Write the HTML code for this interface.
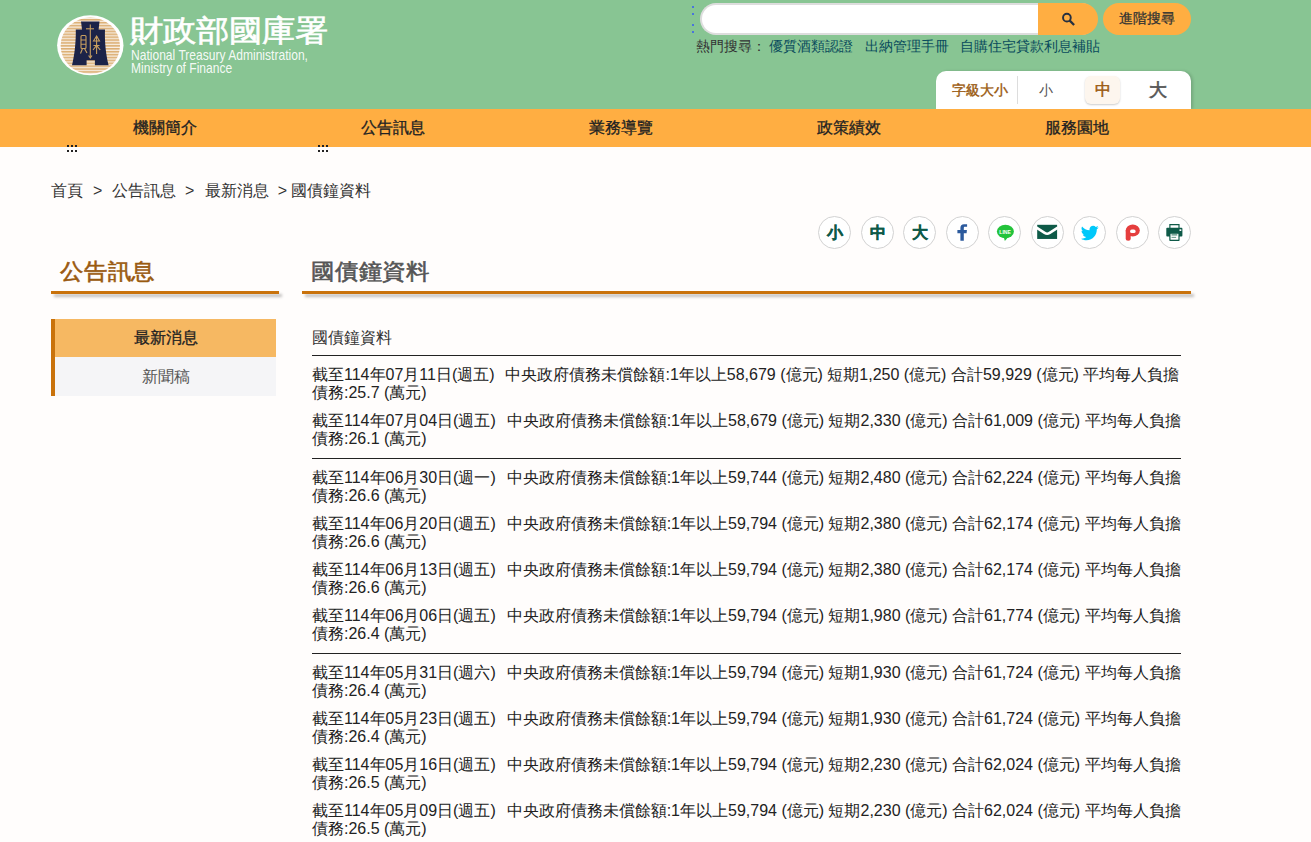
<!DOCTYPE html>
<html><head><meta charset="utf-8">
<style>
*{margin:0;padding:0;box-sizing:border-box}
html,body{width:1311px;height:842px;overflow:hidden;background:#fffdfc;font-family:"Liberation Sans",sans-serif;color:#333}
.abs{position:absolute;white-space:nowrap}
#hdr{position:absolute;left:0;top:0;width:1311px;height:109px;background:#88c593}
#nav{position:absolute;z-index:2;left:0;top:109px;width:1311px;height:38px;background:#ffae42}
.navi{position:absolute;top:0;height:38px;line-height:38px;width:228px;text-align:center;font-size:16px;color:#222;-webkit-text-stroke:.3px #222}
.title1{font-size:33px;color:#fff;line-height:32px;-webkit-text-stroke:.7px #fff;transform:scaleY(.9);transform-origin:0 0}
.en{font-size:14.2px;color:rgba(255,255,255,.93);line-height:13px;transform:scaleX(.85);transform-origin:0 0}
#search{position:absolute;left:700px;top:3px;width:397px;height:32px;border-radius:16px;background:#fff;border:2px solid #ddd;border-right:none;overflow:hidden}
#sbtn{position:absolute;left:1038px;top:3px;width:60px;height:32px;border-radius:0 16px 16px 0;background:#ffae42}
#adv{position:absolute;left:1103px;top:3px;width:88px;height:32px;border-radius:16px;background:#ffae42;text-align:center;line-height:30.6px;font-size:14px;color:#333;-webkit-text-stroke:.25px #333}
.hot{position:absolute;left:696px;top:37px;font-size:14px;line-height:18px;color:#333;white-space:nowrap}
.hot a{color:#084b5c;text-decoration:none;margin-left:11.5px}
.dk{width:2px;height:2px;background:#222;z-index:3}
.dot{width:1.8px;height:1.8px;background:#4a74dc}
#fsz{position:absolute;left:936px;top:71px;width:255px;height:38px;background:#fff;border-radius:10px 10px 0 0;box-shadow:2px 0 3px rgba(0,0,0,.15)}
.crumb{position:absolute;left:51px;top:180.8px;font-size:16px;line-height:20px;color:#333;white-space:nowrap}
.share{position:absolute;top:216px;width:33px;height:33px;border-radius:50%;border:1px solid #d2d2d2;background:#fff}
.share span{position:absolute;left:0;top:0;width:31px;height:31px;line-height:31px;text-align:center;font-size:16px;font-weight:bold;color:#0e5a48;-webkit-text-stroke:.3px #0e5a48}
.share svg{position:absolute;left:0;top:0}
.h2l{position:absolute;left:60px;top:258.2px;transform:scale(.99,.93);transform-origin:0 0;font-size:24px;line-height:30px;font-weight:500;-webkit-text-stroke:.6px currentColor;color:#9a5a10}
.h2r{position:absolute;left:311px;top:258.2px;transform:scale(.99,.93);transform-origin:0 0;font-size:24px;line-height:30px;font-weight:500;-webkit-text-stroke:.6px currentColor;color:#555}
.uline{position:absolute;top:291px;height:3px;background:#c9720b;box-shadow:3px 3px 3px rgba(0,0,0,.25)}
.menu{position:absolute;left:51px;width:225px;height:38px;line-height:38px;text-align:center;font-size:16px;border-left:4px solid #c9720b}
#content{position:absolute;left:312px;top:325px;width:869px;font-size:16px;color:#222}
.ct{line-height:26px;height:30px;color:#333}
hr{border:none;border-top:1px solid #222;height:0}
.it{line-height:18px;white-space:nowrap;margin:10px 0}
</style></head><body>
<div id="hdr"></div>
<div id="nav"><div class="navi" style="left:51px">機關簡介</div><div class="navi" style="left:279px">公告訊息</div><div class="navi" style="left:507px">業務導覽</div><div class="navi" style="left:735px">政策績效</div><div class="navi" style="left:963px">服務園地</div></div>
<svg class="abs" style="left:50px;top:10px" width="80" height="70" viewBox="0 0 80 70">
<defs><clipPath id="ce"><ellipse cx="40.3" cy="35.8" rx="29.7" ry="28.2"/></clipPath>
<pattern id="st" width="4" height="2.9" patternUnits="userSpaceOnUse" y="0.3"><rect width="4" height="2.9" fill="#f8efe4"/><rect width="4" height="1.6" fill="#dcae72"/></pattern></defs>
<ellipse cx="40.3" cy="35.3" rx="33.2" ry="30" fill="#fff"/>
<rect x="0" y="0" width="80" height="70" fill="url(#st)" clip-path="url(#ce)"/>
<path d="M31,11.5 L49.5,11.5 L48.6,19.5 L55,19.5 C54.5,32 56,45 58.6,55.3 L44.9,55.3 L44.9,50.3 L36.6,50.3 L36.6,55.3 L22,55.3 C24.6,45 26,32 25.8,19.5 L32,19.5 Z" fill="#1c2348"/>
<g stroke="#c9a060" stroke-width="1.1" fill="none">
<path d="M40.3,14.5 V47"/><path d="M36,18.8 H44"/><path d="M38.6,45.5 L40.3,48 L42,45.5"/>
<rect x="31" y="25.5" width="5" height="13" rx="1"/><path d="M31,30 H36 M31,34.3 H36"/><path d="M32.5,38.5 L30.5,43.5 M34.5,38.5 L37,43"/>
<path d="M43.5,31 L46.6,26 L49.5,31 Z"/><path d="M46.6,26 V44 M43,40 L46.6,35.5 L50.2,40 M43.5,35.5 H49.5"/>
</g>
</svg>
<div class="abs title1" style="left:130px;top:17px">財政部國庫署</div>
<div class="abs en" style="left:130.8px;top:48.9px">National Treasury Administration,<br>Ministry of Finance</div>
<div class="abs dot" style="left:692px;top:6.3px"></div><div class="abs dot" style="left:692px;top:13.3px"></div><div class="abs dot" style="left:692px;top:23.8px"></div><div class="abs dot" style="left:692px;top:30.8px"></div>
<div id="search"></div>
<div id="sbtn"><svg width="60" height="32" viewBox="0 0 60 32"><circle cx="28.9" cy="14.65" r="3.85" stroke="#263040" stroke-width="1.95" fill="none"/><path d="M31.5,17.4 L36.1,22" stroke="#263040" stroke-width="2.3"/></svg></div>
<div id="adv">進階搜尋</div>
<div class="hot">熱門搜尋：<a style="margin-left:3px">優質酒類認證</a><a>出納管理手冊</a><a>自購住宅貸款利息補貼</a></div>
<div id="fsz">
 <div class="abs" style="left:15.5px;top:0;line-height:38px;font-size:14px;color:#9a5a10;-webkit-text-stroke:.4px #9a5a10">字級大小</div>
 <div class="abs" style="left:81px;top:5px;width:1px;height:28px;background:#ddd"></div>
 <div class="abs" style="left:103px;top:0;line-height:38px;font-size:14px;color:#555">小</div>
 <div class="abs" style="left:149px;top:5px;width:35px;height:28px;border-radius:6px;background:#fdf6ee;box-shadow:0 1px 2px rgba(0,0,0,.2)"></div>
 <div class="abs" style="left:159px;top:0;line-height:38px;font-size:16px;color:#9a5a10;-webkit-text-stroke:.5px #9a5a10">中</div>
 <div class="abs" style="left:213px;top:0;line-height:38px;font-size:18px;color:#555;-webkit-text-stroke:.6px #555">大</div>
</div>
<div class="abs dk" style="left:67px;top:145px"></div><div class="abs dk" style="left:71px;top:145px"></div><div class="abs dk" style="left:75px;top:145px"></div><div class="abs dk" style="left:67px;top:150px"></div><div class="abs dk" style="left:71px;top:150px"></div><div class="abs dk" style="left:75px;top:150px"></div>
<div class="abs dk" style="left:318px;top:145px"></div><div class="abs dk" style="left:322px;top:145px"></div><div class="abs dk" style="left:326px;top:145px"></div><div class="abs dk" style="left:318px;top:150px"></div><div class="abs dk" style="left:322px;top:150px"></div><div class="abs dk" style="left:326px;top:150px"></div>
<div class="crumb">首頁 &nbsp;<span style="margin-left:1px">&gt;</span>&nbsp; <span style="margin-left:1px">公告訊息</span> &nbsp;&gt;&nbsp; <span style="margin-left:1.5px">最新消息</span> &nbsp;&gt; 國債鐘資料</div>
<div class="share" style="left:818.00px"><span>小</span></div><div class="share" style="left:861.00px"><span>中</span></div><div class="share" style="left:903.00px"><span>大</span></div><div class="share" style="left:946.00px"><svg width="31" height="31" viewBox="0 0 31 31"><path d="M13.4,23.8 V16.3 H10.4 V13 H13.4 V11 C13.4,8.7 14.6,7.2 17,7.2 H20.1 V9.8 H17.9 C17.2,9.8 16.8,10.2 16.8,11 V13 H19.9 L19.6,16.3 H16.8 V23.8 Z" fill="#2c5a9d"/></svg></div><div class="share" style="left:988.00px"><svg width="31" height="31" viewBox="0 0 31 31"><ellipse cx="16.4" cy="14.5" rx="8.5" ry="6.8" fill="#23c33b"/><path d="M14.7,20 L15.9,24 L19.2,20 Z" fill="#23c33b"/><text x="16.05" y="16.6" font-family="Liberation Sans" font-weight="bold" font-size="5" fill="#fff" text-anchor="middle">LINE</text></svg></div><div class="share" style="left:1031.00px"><svg width="31" height="31" viewBox="0 0 31 31"><rect x="5.2" y="7.8" width="19.9" height="14.15" fill="#0e5a48"/><path d="M4.5,10.6 L12.6,15.9 Q15.15,17.6 17.7,15.9 L25.8,10.6" stroke="#fff" stroke-width="2.6" fill="none"/></svg></div><div class="share" style="left:1073.00px"><svg viewBox="0 0 24 24" style="left:7.2px;top:6.9px" width="17.9" height="17.9"><path d="M23.6,4.6c-.9.4-1.8.6-2.8.8 1-.6 1.8-1.6 2.1-2.7-.9.6-2,1-3.1,1.2C18.9,2.9 17.7,2.3 16.3,2.3c-2.7,0-4.9,2.2-4.9,4.9 0,.4 0,.8.1,1.1C7.4,8.1 3.8,6.2 1.4,3.2 1,3.9.7,4.8.7,5.7c0,1.7.9,3.2 2.2,4.1-.8,0-1.6-.2-2.2-.6v.1c0,2.4 1.7,4.4 3.9,4.8-.4.1-.8.2-1.3.2-.3,0-.6,0-.9-.1.6,2 2.4,3.4 4.6,3.4-1.7,1.3-3.8,2.1-6.1,2.1-.4,0-.8,0-1.2-.1 2.2,1.4 4.8,2.2 7.5,2.2 9.1,0 14-7.5 14-14v-.6c1-.7 1.8-1.6 2.4-2.5z" fill="#00c8fa"/></svg></div><div class="share" style="left:1116.00px"><svg width="31" height="31" viewBox="0 0 31 31"><ellipse cx="15.75" cy="13.6" rx="7.05" ry="6" fill="#e53e3e"/><path d="M8.7,13.6 H13.7 V21.2 A2.5,2.5 0 0 1 8.7,21.2 Z" fill="#e53e3e"/><rect x="13.1" y="12.6" width="5.5" height="3.5" rx="1.7" fill="#fff"/></svg></div><div class="share" style="left:1158.00px"><svg width="31" height="31" viewBox="0 0 31 31"><path d="M10.9,11.5 V7.6 H20 V11.5" stroke="#0e5a48" stroke-width="1.15" fill="none"/><rect x="7.3" y="10.8" width="16.1" height="8.7" rx=".9" fill="#0e5a48"/><rect x="20.5" y="12.3" width="1.8" height="1.7" fill="#fff"/><rect x="10.3" y="16" width="10.3" height="8" rx=".8" fill="#0e5a48"/><rect x="11.5" y="16.8" width="7.9" height="5.9" fill="#fff"/><rect x="12.5" y="17.1" width="5.8" height="1.5" fill="#6b9f8f"/><rect x="12.5" y="19.9" width="4.6" height=".8" fill="#3f7f6c"/></svg></div>
<div class="h2l">公告訊息</div>
<div class="uline" style="left:51px;width:228px"></div>
<div class="h2r">國債鐘資料</div>
<div class="uline" style="left:302px;width:889px"></div>
<div class="menu" style="top:319px;background:#f6b862;color:#222;-webkit-text-stroke:.3px #222">最新消息</div>
<div class="menu" style="top:357px;height:39px;line-height:40px;background:#f5f5f7;color:#555">新聞稿</div>
<div id="content">
<div class="ct">國債鐘資料</div>
<hr>
<div class="it">截至114年07月11日(週五)&nbsp; <span style="margin-left:2px">中央政府債務未償餘額:1年以上58,679 (億元) 短期1,250 (億元) 合計59,929 (億元) 平均每人負擔</span><br>債務:25.7 (萬元)</div>
<div class="it">截至114年07月04日(週五)&nbsp; <span style="margin-left:2px">中央政府債務未償餘額:1年以上58,679 (億元) 短期2,330 (億元) 合計61,009 (億元) 平均每人負擔</span><br>債務:26.1 (萬元)</div>
<hr>
<div class="it">截至114年06月30日(週一)&nbsp; <span style="margin-left:2px">中央政府債務未償餘額:1年以上59,744 (億元) 短期2,480 (億元) 合計62,224 (億元) 平均每人負擔</span><br>債務:26.6 (萬元)</div>
<div class="it">截至114年06月20日(週五)&nbsp; <span style="margin-left:2px">中央政府債務未償餘額:1年以上59,794 (億元) 短期2,380 (億元) 合計62,174 (億元) 平均每人負擔</span><br>債務:26.6 (萬元)</div>
<div class="it">截至114年06月13日(週五)&nbsp; <span style="margin-left:2px">中央政府債務未償餘額:1年以上59,794 (億元) 短期2,380 (億元) 合計62,174 (億元) 平均每人負擔</span><br>債務:26.6 (萬元)</div>
<div class="it">截至114年06月06日(週五)&nbsp; <span style="margin-left:2px">中央政府債務未償餘額:1年以上59,794 (億元) 短期1,980 (億元) 合計61,774 (億元) 平均每人負擔</span><br>債務:26.4 (萬元)</div>
<hr>
<div class="it">截至114年05月31日(週六)&nbsp; <span style="margin-left:2px">中央政府債務未償餘額:1年以上59,794 (億元) 短期1,930 (億元) 合計61,724 (億元) 平均每人負擔</span><br>債務:26.4 (萬元)</div>
<div class="it">截至114年05月23日(週五)&nbsp; <span style="margin-left:2px">中央政府債務未償餘額:1年以上59,794 (億元) 短期1,930 (億元) 合計61,724 (億元) 平均每人負擔</span><br>債務:26.4 (萬元)</div>
<div class="it">截至114年05月16日(週五)&nbsp; <span style="margin-left:2px">中央政府債務未償餘額:1年以上59,794 (億元) 短期2,230 (億元) 合計62,024 (億元) 平均每人負擔</span><br>債務:26.5 (萬元)</div>
<div class="it">截至114年05月09日(週五)&nbsp; <span style="margin-left:2px">中央政府債務未償餘額:1年以上59,794 (億元) 短期2,230 (億元) 合計62,024 (億元) 平均每人負擔</span><br>債務:26.5 (萬元)</div>
</div>
</body></html>
